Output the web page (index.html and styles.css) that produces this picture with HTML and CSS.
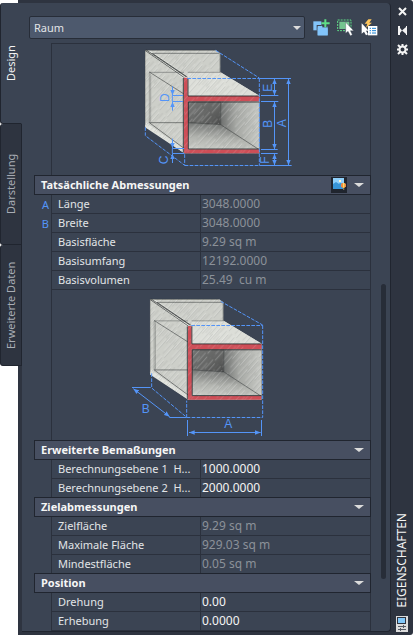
FILE: index.html
```
<!DOCTYPE html>
<html lang="de">
<head>
  <meta charset="UTF-8">
  <meta name="viewport" content="width=device-width, initial-scale=1.0">
  <title>Eigenschaften</title>
  <link rel="stylesheet" href="styles.css">
</head>
<body>
  <div class="palette">
    <nav class="tabs">
      <button class="tab active">Design</button>
      <button class="tab">Darstellung</button>
      <button class="tab">Erweiterte Daten</button>
    </nav>

    <div class="frame">
      <main class="panel">
        <div class="toolbar">
          <select class="object-type" aria-label="Objekttyp">
            <option>Raum</option>
          </select>
          <button class="tool" aria-label="Auswahl umschalten">
            <svg width="17" height="17" viewBox="332 59 51 51">
              <path d="M333 66h24v27h-24z" fill="#82c4fa"/>
              <path d="M343 77h14v17h-14z" fill="#3b4453"/>
              <path d="M346 80h30v28h-30z" fill="#82c4fa"/>
              <path d="M360 78h16v9h-16z" fill="#3b4453"/>
              <path d="M346 84h30v24h-30z" fill="#82c4fa"/>
              <path d="M366 60h6v9h10v6h-10v9h-6v-9h-9v-6h9z" fill="#5fdc86"/>
            </svg>
          </button>
          <button class="tool" aria-label="Objekte wählen">
            <svg width="17" height="17" viewBox="404 59 51 51">
              <rect x="406" y="62" width="40" height="32" fill="none" stroke="#5fdc86" stroke-width="3" stroke-dasharray="6 3"/>
              <rect x="411" y="67" width="30" height="22" fill="#74c48f"/>
              <path d="M430 69v33l7-6 7 13 6-3-6-12h10z" fill="#fff" stroke="#3b4453" stroke-width="1"/>
            </svg>
          </button>
          <button class="tool" aria-label="Schnellauswahl">
            <svg width="17" height="17" viewBox="476 59 51 51">
              <path d="M478 72v31l7-6 6 11 6-3-6-11h8z" fill="#fff"/>
              <path d="M498 60l-11 13h8l-4 12 18-15h-8l7-10z" fill="#ffc65c"/>
              <rect x="497" y="80" width="28" height="28" fill="#fff"/>
              <path d="M502 87h4m3 0h12M502 94h4m3 0h12M502 101h4m3 0h12" stroke="#1b82d2" stroke-width="3"/>
            </svg>
          </button>
        </div>

        <div class="content">
          <div class="sheet">
            <div class="drawing first">
              <svg width="198" height="132" viewBox="-54 12 594 396">
                <defs>
                  <pattern id="pencil" width="31" height="97" patternUnits="userSpaceOnUse" patternTransform="rotate(42)">
                    <path d="M3 0v52M9 30v60M15 4v44M21 40v57M27 10v50" stroke="#85888a" stroke-width="2" opacity=".28"/>
                    <path d="M6 20v60M12 0v38M18 50v45M24 6v50" stroke="#fff" stroke-width="2" opacity=".3"/>
                  </pattern>
                  <linearGradient id="backShade" x1="0" x2="1" y1="0" y2="1">
                    <stop offset="0" stop-color="#737473"/>
                    <stop offset=".6" stop-color="#626362"/>
                    <stop offset="1" stop-color="#4a4b4b"/>
                  </linearGradient>
                  <linearGradient id="sideShade">
                    <stop offset="0" stop-color="#6e706f"/>
                    <stop offset=".4" stop-color="#a6a8a4"/>
                    <stop offset="1" stop-color="#c6c8c3"/>
                  </linearGradient>
                  <linearGradient id="floorShade" x1=".5" x2=".3" y1="0" y2="1">
                    <stop offset="0" stop-color="#6c6e6d"/>
                    <stop offset=".6" stop-color="#b2b4af"/>
                    <stop offset="1" stop-color="#c8cac5"/>
                  </linearGradient>
                  <marker id="arrow" markerUnits="userSpaceOnUse" markerWidth="18" markerHeight="16" refX="17" refY="8" orient="auto-start-reverse">
                    <path d="M0 1l17 7-17 7z" fill="#5495f8"/>
                  </marker>
                  <g id="room">
                    <path d="M45 30H257l14 10v57l117 70v173H163L45 258z" fill="#cdcfc9"/>
                    <path d="M172 97h100l116 70H172z" fill="#dcded8"/>
                    <path d="M45 30h14l113 78v8h-11z" fill="#e4e6e0"/>
                    <path d="M48 248l115 78v14L45 262z" fill="#e2e4de"/>
                    <path d="M174 184h98v70l-98-6z" fill="url(#backShade)"/>
                    <path d="M272 184h116v144l-116-74z" fill="url(#sideShade)"/>
                    <path d="M174 248l98 6 114 74H174z" fill="url(#floorShade)"/>
                    <path d="M45 30H257l14 10v57l117 70v173H163L45 258z" fill="url(#pencil)"/>
                    <g fill="none" stroke="#292d2e" stroke-width="2">
                      <path d="M45 31L163 113M49 30l119 80M67 40l105 71"/>
                      <path d="M67 40H268M46 31H257" opacity=".75"/>
                      <path d="M46 32V255M58 97V248M62 101V247" opacity=".4"/>
                      <path d="M58 96L162 162M58 248H162M58 248l104 77" opacity=".8"/>
                      <path d="M58 97h104M173 97h99M270 40v57" opacity=".55"/>
                      <path d="M174 248l98 6 114 74M272 185v69" opacity=".8"/>
                    </g>
                    <path d="M162 113h11v55h215v16H174v144h213v12H162z" fill="#cf4d56"/>
                    <path d="M162 113h11v55h215v16H174v144h213v12H162z" fill="url(#pencil)" opacity=".6"/>
                    <path d="M160 114V338M174 114v54h212M388 186H175v141h213" fill="none" stroke="#24282b" stroke-width="3" opacity=".85"/>
                  </g>
                </defs>
                <use href="#room"/>
                <g class="hidden-edges">
                  <path d="M257 31L388 114"/>
                  <path d="M172 115.500H388"/>
                  <path d="M388 115V376"/>
                  <path d="M46 262v25l118 89v-34"/>
                  <path d="M164 376.500H388"/>
                </g>
                <g class="dimension">
                  <path d="M388 115.500h95M393 166.500h52M393 184.500h52M393 328.500h50M393 340.500h50M388 376.500h97"/>
                  <path d="M127 166.500h32M127 184.500h32M127 325.500h36M127 340.500h36M127 166v18M127 325v15"/>
                  <path class="both" d="M433.500 116v50"/>
                  <path class="both" d="M433.500 185v143"/>
                  <path class="both" d="M433.500 341v35"/>
                  <path class="both" d="M475.500 116v260"/>
                  <path class="end" d="M127.500 139v27"/>
                  <path class="end" d="M127.500 212v-27"/>
                  <path class="end" d="M127.500 296v29"/>
                  <path class="end" d="M127.500 369v-28"/>
                </g>
                <g class="letters">
                  <text transform="translate(116 173) rotate(-90)">D</text>
                  <text transform="translate(115 360) rotate(-90)">C</text>
                  <text transform="translate(425 143) rotate(-90)">E</text>
                  <text transform="translate(425 251) rotate(-90)">B</text>
                  <text transform="translate(468 250) rotate(-90)">A</text>
                  <text transform="translate(418 360) rotate(-90)">F</text>
                </g>
              </svg>
            </div>

            <div class="group-header">
              <button class="group-toggle">Tatsächliche Abmessungen</button>
              <button class="preview" aria-label="Vorschaubild">
                <svg width="16" height="16" viewBox="384 36 48 48">
                  <rect x="384" y="36" width="48" height="48" fill="#20252e"/>
                  <rect x="390" y="39" width="33" height="33" fill="#8fd0fb"/>
                  <path d="M390 57l9-6 8 5 6-2 10 3v15h-33z" fill="#3795d8"/>
                  <rect x="408" y="45" width="6" height="6" fill="#fff6d2"/>
                  <path d="M414 57l4-3h7l4 3v7l-4 4h-7l-4-4z" fill="#f08a43"/>
                  <path d="M420 54h4v14h-4z" fill="#f8df63"/>
                  <path d="M420 70h4v5h-4z" fill="#8a7648"/>
                </svg>
              </button>
              <span class="chevron"></span>
            </div>
            <table class="props">
              <tr><td class="mark">A</td><th>Länge</th><td>3048.0000</td></tr>
              <tr><td class="mark">B</td><th>Breite</th><td>3048.0000</td></tr>
              <tr><td class="mark"></td><th>Basisfläche</th><td>9.29 sq m</td></tr>
              <tr><td class="mark"></td><th>Basisumfang</th><td>12192.0000</td></tr>
              <tr><td class="mark"></td><th>Basisvolumen</th><td>25.49  cu m</td></tr>
            </table>

            <div class="drawing">
              <svg width="182" height="151" viewBox="0 0 546 453">
                <use href="#room" transform="translate(46 -2) scale(.975)"/>
                <g class="hidden-edges">
                  <path d="M302 34L428 105"/>
                  <path d="M214 106.500H428"/>
                  <path d="M428 106V382"/>
                  <path d="M95 250v44l105 88v-50"/>
                  <path d="M200 382.500H428"/>
                </g>
                <g class="dimension">
                  <path d="M36 292.500h56M148 382.500h52M202.500 390v48M424.500 390v48"/>
                  <path class="both" d="M40 296L149 380"/>
                  <path class="both" d="M207 427.500H422"/>
                </g>
                <g class="letters">
                  <text x="77" y="369">B</text>
                  <text x="325" y="414">A</text>
                </g>
              </svg>
            </div>

            <div class="group-header">
              <button class="group-toggle">Erweiterte Bemaßungen</button>
              <span class="chevron"></span>
            </div>
            <table class="props">
              <tr><td class="mark"></td><th><label for="level1">Berechnungsebene 1  H...</label></th><td><input id="level1" value="1000.0000"></td></tr>
              <tr><td class="mark"></td><th><label for="level2">Berechnungsebene 2  H...</label></th><td><input id="level2" value="2000.0000"></td></tr>
            </table>

            <div class="group-header">
              <button class="group-toggle">Zielabmessungen</button>
              <span class="chevron"></span>
            </div>
            <table class="props">
              <tr><td class="mark"></td><th>Zielfläche</th><td>9.29 sq m</td></tr>
              <tr><td class="mark"></td><th>Maximale Fläche</th><td>929.03 sq m</td></tr>
              <tr><td class="mark"></td><th>Mindestfläche</th><td>0.05 sq m</td></tr>
            </table>

            <div class="group-header">
              <button class="group-toggle">Position</button>
              <span class="chevron"></span>
            </div>
            <table class="props">
              <tr><td class="mark"></td><th><label for="rotation">Drehung</label></th><td><input id="rotation" value="0.00"></td></tr>
              <tr><td class="mark"></td><th><label for="elevation">Erhebung</label></th><td><input id="elevation" value="0.0000"></td></tr>
            </table>
          </div>
          <div class="scrollbar"><div class="thumb"></div></div>
        </div>
      </main>

      <aside class="titlebar">
        <button class="window-btn" aria-label="Schließen">
          <svg width="11" height="11" viewBox="0 0 11 11"><path d="M2 2l7 7M9 2l-7 7" stroke="#f4f4f4" stroke-width="2"/></svg>
        </button>
        <button class="window-btn" aria-label="Automatisch ausblenden">
          <svg width="11" height="11" viewBox="0 0 11 11"><path d="M1 1h2v9h-2zM3 3l2 2.500-2 2.500zM9 1h1v9h-1zM9 2v7l-4-3.500z" fill="#f4f4f4"/></svg>
        </button>
        <button class="window-btn" aria-label="Einstellungen">
          <svg width="11" height="11" viewBox="0 0 11 11">
            <circle cx="5.500" cy="5.500" r="3" fill="none" stroke="#f4f4f4" stroke-width="2"/>
            <path d="M5.500 0v2M5.500 9v2M0 5.500h2M9 5.500h2M1 1l2 2M8 8l2 2M10 1l-2 2M3 8l-2 2" stroke="#f4f4f4" stroke-width="2"/>
          </svg>
        </button>
        <h1 class="title">EIGENSCHAFTEN</h1>
        <svg width="12" height="16" viewBox="0 0 12 16">
          <rect width="12" height="16" fill="#dcdcdc"/>
          <rect x="1.500" y="1.500" width="8" height="6" fill="#82c8fa" stroke="#2e3440"/>
          <path d="M2 10.500h8M2 13.500h8M7.500 9v3M4.500 12v3" stroke="#555b66" fill="none"/>
        </svg>
      </aside>
    </div>
  </div>
</body>
</html>
```
FILE: styles.css
```
* { box-sizing: border-box; }
body {
  margin: 0;
  background: #fff;
  color: #e2e4e7;
  font-family: "Noto Sans", sans-serif;
  font-size: 11px;
}
button, input, select {
  font: inherit;
  color: inherit;
  background: none;
  border: none;
  padding: 0;
  margin: 0;
}
svg { display: block; }

.palette {
  display: flex;
  min-height: 100vh;
}

/* tabs on the left edge, overlapping the frame */
.tabs {
  display: flex;
  flex-direction: column;
  align-self: flex-start;
  width: 22px;
  margin: 3px -4px 0 0;
  position: relative;
  z-index: 1;
}
.tab {
  height: 121px;
  writing-mode: vertical-rl;
  transform: rotate(180deg);
  line-height: 18px;
  text-align: center;
  color: #a9adb5;
  background: #2e3440;
  border: 1px solid #20252f;
  border-bottom-width: 0;
  border-radius: 0 3px 3px 0;
}
.tab.active {
  color: #f4f4f4;
  background: #3b4453;
  border-left-color: #3b4453;
}

.frame {
  flex: 1;
  display: flex;
  min-width: 0;
  padding: 3px 0 3px 4px;
  background: #2e3440;
  border-radius: 0 3px 3px 0;
}
.panel {
  flex: 1;
  display: flex;
  flex-direction: column;
  min-width: 0;
  background: #3b4453;
  border-right: 1px solid #20252f;
  border-bottom: 1px solid #20252f;
  border-radius: 0 4px 4px 0;
}

.toolbar {
  display: flex;
  align-items: center;
  gap: 7px;
  padding: 13px 12px 4px 7px;
}
.object-type {
  flex: 1;
  height: 23px;
  margin-right: 1px;
  padding: 0 4px;
  appearance: none;
  border: 1px solid #272d38;
  border-radius: 2px;
  background: #4d596d url("data:image/svg+xml,%3Csvg xmlns='http://www.w3.org/2000/svg' width='8' height='4'%3E%3Cpath d='M0 0h8l-4 4z' fill='%23dcdcdc'/%3E%3C/svg%3E") no-repeat right 3px center;
}
.tool {
  width: 17px;
  height: 17px;
}

.content {
  flex: 1;
  display: flex;
  padding-left: 12px;
}
.sheet {
  flex: 1;
  min-width: 0;
}
.drawing {
  display: flex;
  justify-content: center;
  margin-left: 17px;
  border: 1px solid #2b313d;
  border-width: 0 1px;
}
.drawing.first { border-top-width: 1px; }
.hidden-edges, .dimension {
  fill: none;
  stroke: #5495f8;
  stroke-width: 3;
}
.hidden-edges { stroke-dasharray: 11 4; }
.dimension .both { marker-start: url(#arrow); marker-end: url(#arrow); }
.dimension .end { marker-end: url(#arrow); }
.letters {
  fill: #5495f8;
  font-family: "Liberation Sans", sans-serif;
  font-size: 36px;
  text-anchor: middle;
}

.group-header {
  display: flex;
  align-items: center;
  height: 20px;
  margin-top: -1px;
  padding: 0 6px;
  position: relative;
  background: #474f61;
  border: 1px solid #20252f;
}
.group-toggle {
  flex: 1;
  text-align: left;
  line-height: 18px;
  font-weight: bold;
  color: #f6f6f6;
}
.preview {
  width: 16px;
  height: 16px;
  margin-right: 7px;
}
.chevron {
  border: 5px solid transparent;
  border-top: 4px solid #dcdcdc;
  border-bottom: none;
}

.props {
  width: 100%;
  table-layout: fixed;
  border-spacing: 0;
}
.props th, .props td {
  height: 19px;
  padding: 0 0 0 1px;
  line-height: 18px;
  text-align: left;
  font-weight: normal;
  white-space: pre;
  overflow: hidden;
  border: 1px solid #2b313d;
  border-width: 0 1px 1px 0;
}
.props th {
  width: 149px;
  padding-left: 6px;
}
.props td {
  font-size: 12px;
  color: #8b9199;
}
.props .mark {
  width: 18px;
  padding: 0 2px 0 0;
  text-align: right;
  font-size: 11px;
  color: #5495f8;
  border-bottom: none;
}
.props input {
  display: block;
  width: 100%;
  height: 18px;
  color: #f4f4f4;
}

.scrollbar {
  display: flex;
  flex-direction: column;
  width: 19px;
  padding: 0 4px 0 10px;
}
.scrollbar::before {
  content: "";
  flex: 241;
}
.scrollbar::after {
  content: "";
  flex: 52;
}
.thumb {
  flex: 295;
  border-radius: 3px;
  background: #272d38;
}

.titlebar {
  display: flex;
  flex-direction: column;
  align-items: center;
  gap: 8px;
  width: 22px;
  padding-top: 3px;
}
.window-btn {
  width: 11px;
  height: 11px;
}
.title {
  margin: auto 0 0;
  writing-mode: vertical-rl;
  transform: rotate(180deg);
  font-size: 12px;
  font-weight: normal;
  line-height: 16px;
  color: #f4f4f4;
}
```
